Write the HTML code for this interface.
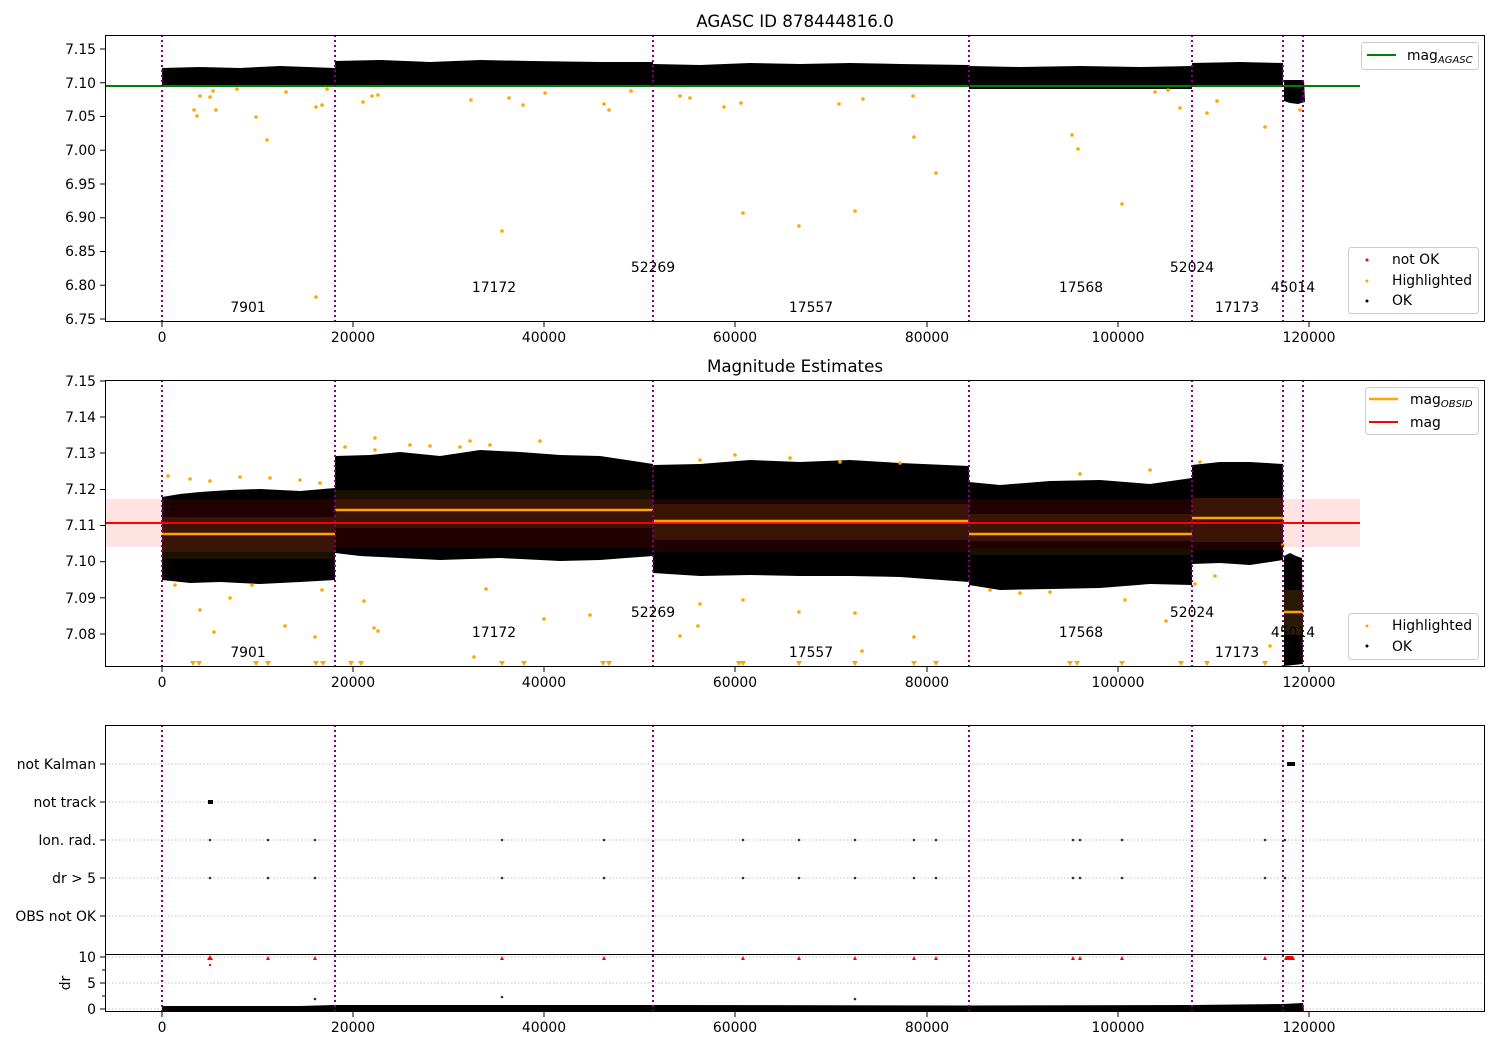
<!DOCTYPE html>
<html><head><meta charset="utf-8"><style>
html,body{margin:0;padding:0;background:#fff;}
svg{display:block;font-family:"DejaVu Sans","Liberation Sans",sans-serif;}
</style></head><body>
<svg width="1500" height="1050" viewBox="0 0 1500 1050" xmlns="http://www.w3.org/2000/svg">
<rect width="1500" height="1050" fill="#fff"/>
<text x="795" y="27" font-size="16.7" text-anchor="middle">AGASC ID 878444816.0</text>

<!-- ===== PLOT 1 ===== -->
<g>
<g fill="#000">
<path d="M162,68 L200,67 240,68 280,66 335,68 L335,87 L162,87Z"/>
<path d="M335,61 L380,60 430,62 480,60 530,61 600,62 653,62 L653,86 L335,86Z"/>
<path d="M653,64 L700,65 750,63 800,64 850,63 900,64 969,65 L969,87 L653,87Z"/>
<path d="M969,66 L1020,67 1080,66 1140,67 1192,66 L1192,89 L969,89Z"/>
<path d="M1192,63 L1240,62 1283,63 L1283,85 L1192,85Z"/>
<path d="M1284,80 L1304,80 L1305,102 1298,104 1290,103 1284,101Z"/>
</g>
<line x1="105" y1="86" x2="1360" y2="86" stroke="#008000" stroke-width="2"/>
<g fill="#ffa500">
<circle cx="194" cy="110" r="1.8"/><circle cx="197" cy="116" r="1.8"/><circle cx="200" cy="96" r="1.8"/><circle cx="210" cy="97" r="1.8"/><circle cx="213" cy="91" r="1.8"/><circle cx="256" cy="117" r="1.8"/><circle cx="267" cy="140" r="1.8"/><circle cx="216" cy="110" r="1.8"/><circle cx="237" cy="89" r="1.8"/><circle cx="286" cy="92" r="1.8"/><circle cx="316" cy="107" r="1.8"/><circle cx="322" cy="105" r="1.8"/><circle cx="327" cy="89" r="1.8"/>
<circle cx="316" cy="297" r="1.8"/><circle cx="363" cy="102" r="1.8"/><circle cx="378" cy="95" r="1.8"/><circle cx="372" cy="96" r="1.8"/><circle cx="471" cy="100" r="1.8"/><circle cx="509" cy="98" r="1.8"/><circle cx="523" cy="105" r="1.8"/><circle cx="545" cy="93" r="1.8"/><circle cx="502" cy="231" r="1.8"/><circle cx="604" cy="104" r="1.8"/><circle cx="609" cy="110" r="1.8"/><circle cx="631" cy="91" r="1.8"/>
<circle cx="680" cy="96" r="1.8"/><circle cx="690" cy="98" r="1.8"/><circle cx="724" cy="107" r="1.8"/><circle cx="741" cy="103" r="1.8"/><circle cx="743" cy="213" r="1.8"/><circle cx="799" cy="226" r="1.8"/><circle cx="839" cy="104" r="1.8"/><circle cx="855" cy="211" r="1.8"/><circle cx="863" cy="99" r="1.8"/><circle cx="914" cy="137" r="1.8"/><circle cx="936" cy="173" r="1.8"/><circle cx="913" cy="96" r="1.8"/>
<circle cx="1072" cy="135" r="1.8"/><circle cx="1078" cy="149" r="1.8"/><circle cx="1122" cy="204" r="1.8"/><circle cx="1155" cy="92" r="1.8"/><circle cx="1168" cy="90" r="1.8"/><circle cx="1180" cy="108" r="1.8"/><circle cx="1207" cy="113" r="1.8"/><circle cx="1217" cy="101" r="1.8"/><circle cx="1265" cy="127" r="1.8"/><circle cx="1300" cy="110" r="1.8"/>
</g>
<g stroke="#800080" stroke-width="2" stroke-dasharray="2,3">
<line x1="162" y1="35" x2="162" y2="321"/><line x1="335" y1="35" x2="335" y2="321"/><line x1="653" y1="35" x2="653" y2="321"/><line x1="969" y1="35" x2="969" y2="321"/><line x1="1192" y1="35" x2="1192" y2="321"/><line x1="1283" y1="35" x2="1283" y2="321"/><line x1="1303" y1="35" x2="1303" y2="321"/>
</g>
<g font-size="13.9" text-anchor="middle">
<text x="248" y="312">7901</text><text x="494" y="292">17172</text><text x="653" y="272">52269</text><text x="811" y="312">17557</text><text x="1081" y="292">17568</text><text x="1192" y="272">52024</text><text x="1237" y="312">17173</text><text x="1293" y="292">45014</text>
</g>
<rect x="105.5" y="35.5" width="1379" height="286" fill="none" stroke="#000" stroke-width="1"/>
<g stroke="#000"><line x1="100" y1="49" x2="105" y2="49"/><line x1="100" y1="82.75" x2="105" y2="82.75"/><line x1="100" y1="116.5" x2="105" y2="116.5"/><line x1="100" y1="150.25" x2="105" y2="150.25"/><line x1="100" y1="184" x2="105" y2="184"/><line x1="100" y1="217.75" x2="105" y2="217.75"/><line x1="100" y1="251.5" x2="105" y2="251.5"/><line x1="100" y1="285.25" x2="105" y2="285.25"/><line x1="100" y1="319" x2="105" y2="319"/></g>
<g font-size="13.9" text-anchor="end">
<text x="96" y="54">7.15</text><text x="96" y="88">7.10</text><text x="96" y="121">7.05</text><text x="96" y="155">7.00</text><text x="96" y="189">6.95</text><text x="96" y="222">6.90</text><text x="96" y="256">6.85</text><text x="96" y="290">6.80</text><text x="96" y="324">6.75</text>
</g>
<g stroke="#000"><line x1="162" y1="322" x2="162" y2="327"/><line x1="353" y1="322" x2="353" y2="327"/><line x1="544" y1="322" x2="544" y2="327"/><line x1="735" y1="322" x2="735" y2="327"/><line x1="927" y1="322" x2="927" y2="327"/><line x1="1118" y1="322" x2="1118" y2="327"/><line x1="1309" y1="322" x2="1309" y2="327"/></g>
<g font-size="13.9" text-anchor="middle">
<text x="162" y="342">0</text><text x="353" y="342">20000</text><text x="544" y="342">40000</text><text x="735" y="342">60000</text><text x="927" y="342">80000</text><text x="1118" y="342">100000</text><text x="1309" y="342">120000</text>
</g>
<rect x="1361.5" y="42.5" width="117" height="27" rx="3" fill="#fff" fill-opacity="0.8" stroke="#ccc"/>
<line x1="1367" y1="55" x2="1396" y2="55" stroke="#008000" stroke-width="2"/>
<text x="1407" y="60" font-size="13.9">mag<tspan font-size="10" font-style="italic" dy="3">AGASC</tspan></text>
<rect x="1348.5" y="247.5" width="130" height="66" rx="3" fill="#fff" fill-opacity="0.8" stroke="#ccc"/>
<circle cx="1367" cy="260" r="1.5" fill="#f00"/><text x="1392" y="264" font-size="13.9">not OK</text>
<circle cx="1367" cy="281" r="1.5" fill="#ffa500"/><text x="1392" y="285" font-size="13.9">Highlighted</text>
<circle cx="1367" cy="301" r="1.5" fill="#000"/><text x="1392" y="305" font-size="13.9">OK</text>
</g>

<!-- ===== PLOT 2 ===== -->
<g>
<text x="795" y="372" font-size="16.7" text-anchor="middle">Magnitude Estimates</text>
<rect x="105" y="499" width="1255" height="48" fill="#ffcccc" fill-opacity="0.55"/>
<g fill="#000">
<path d="M162,497 L180,494 200,492 230,490 260,489 300,491 335,488 L335,580 L300,582 260,584 220,582 190,583 162,580Z"/>
<path d="M335,456 L370,455 400,452 440,456 480,450 520,452 560,455 600,456 653,464 L653,556 L600,560 560,561 500,558 440,560 400,558 360,556 335,553Z"/>
<path d="M653,465 L700,464 750,460 800,462 850,460 900,463 969,466 L969,582 L900,577 850,576 800,576 750,575 700,576 653,573Z"/>
<path d="M969,482 L1000,485 1050,481 1100,480 1150,484 1192,478 L1192,585 L1150,584 1100,588 1050,589 1000,590 969,585Z"/>
<path d="M1192,465 L1220,462 1250,462 1283,464 L1283,560 L1250,565 1220,563 1192,564Z"/>
<path d="M1284,556 L1290,553 1296,556 1302,558 L1303,664 L1284,666Z"/>
</g>
<rect x="162" y="499" width="173" height="53" fill="#200000"/>
<rect x="162" y="517" width="173" height="35" fill="#3a1505"/>
<rect x="162" y="552" width="173" height="7" fill="#1a1000"/>
<rect x="335" y="490" width="318" height="10" fill="#1a1000"/>
<rect x="335" y="499" width="318" height="48" fill="#3a1505"/>
<rect x="335" y="528" width="318" height="20" fill="#200000"/>
<rect x="653" y="499" width="316" height="53" fill="#200000"/>
<rect x="653" y="504" width="316" height="36" fill="#3a1505"/>
<rect x="969" y="499" width="223" height="53" fill="#200000"/>
<rect x="969" y="514" width="223" height="27" fill="#3a1505"/>
<rect x="969" y="548" width="223" height="7" fill="#1a1000"/>
<rect x="1192" y="498" width="91" height="44" fill="#3a1505"/>
<rect x="1192" y="542" width="91" height="8" fill="#200000"/>
<rect x="1284" y="590" width="19" height="45" fill="#2a1a05"/>
<line x1="105" y1="523" x2="1360" y2="523" stroke="#f00" stroke-width="2"/>
<g stroke="#ffa500" stroke-width="2.5">
<line x1="162" y1="534" x2="335" y2="534"/><line x1="335" y1="510" x2="653" y2="510"/><line x1="653" y1="521" x2="969" y2="521"/><line x1="969" y1="534" x2="1192" y2="534"/><line x1="1192" y1="518" x2="1283" y2="518"/><line x1="1284" y1="612" x2="1303" y2="612"/>
</g>
<g fill="#ffa500">
<circle cx="168" cy="476" r="1.8"/><circle cx="190" cy="479" r="1.8"/><circle cx="210" cy="481" r="1.8"/><circle cx="240" cy="477" r="1.8"/><circle cx="270" cy="478" r="1.8"/><circle cx="300" cy="480" r="1.8"/><circle cx="320" cy="483" r="1.8"/><circle cx="175" cy="585" r="1.8"/><circle cx="200" cy="610" r="1.8"/><circle cx="214" cy="632" r="1.8"/><circle cx="230" cy="598" r="1.8"/><circle cx="252" cy="585" r="1.8"/><circle cx="285" cy="626" r="1.8"/><circle cx="315" cy="637" r="1.8"/><circle cx="322" cy="590" r="1.8"/>
<circle cx="345" cy="447" r="1.8"/><circle cx="375" cy="438" r="1.8"/><circle cx="410" cy="445" r="1.8"/><circle cx="375" cy="450" r="1.8"/><circle cx="430" cy="446" r="1.8"/><circle cx="460" cy="447" r="1.8"/><circle cx="470" cy="441" r="1.8"/><circle cx="490" cy="445" r="1.8"/><circle cx="540" cy="441" r="1.8"/><circle cx="364" cy="601" r="1.8"/><circle cx="374" cy="628" r="1.8"/><circle cx="378" cy="631" r="1.8"/><circle cx="486" cy="589" r="1.8"/><circle cx="474" cy="657" r="1.8"/><circle cx="544" cy="619" r="1.8"/><circle cx="590" cy="615" r="1.8"/>
<circle cx="700" cy="460" r="1.8"/><circle cx="735" cy="455" r="1.8"/><circle cx="790" cy="458" r="1.8"/><circle cx="840" cy="462" r="1.8"/><circle cx="900" cy="463" r="1.8"/><circle cx="700" cy="604" r="1.8"/><circle cx="698" cy="626" r="1.8"/><circle cx="743" cy="600" r="1.8"/><circle cx="799" cy="612" r="1.8"/><circle cx="855" cy="613" r="1.8"/><circle cx="862" cy="651" r="1.8"/><circle cx="914" cy="637" r="1.8"/><circle cx="680" cy="636" r="1.8"/>
<circle cx="990" cy="590" r="1.8"/><circle cx="1020" cy="593" r="1.8"/><circle cx="1050" cy="592" r="1.8"/><circle cx="1080" cy="474" r="1.8"/><circle cx="1150" cy="470" r="1.8"/><circle cx="1166" cy="621" r="1.8"/><circle cx="1125" cy="600" r="1.8"/><circle cx="1200" cy="462" r="1.8"/><circle cx="1195" cy="584" r="1.8"/><circle cx="1215" cy="576" r="1.8"/><circle cx="1270" cy="646" r="1.8"/><circle cx="1283" cy="545" r="1.8"/>
</g>
<g fill="#ffa500">
<path d="M190,661h6l-3,5z M196,661h6l-3,5z M253,661h6l-3,5z M265,661h6l-3,5z M313,661h6l-3,5z M320,661h6l-3,5z M348,661h6l-3,5z M358,661h6l-3,5z M499,661h6l-3,5z M521,661h6l-3,5z M600,661h6l-3,5z M606,661h6l-3,5z M736,661h6l-3,5z M740,661h6l-3,5z M796,661h6l-3,5z M852,661h6l-3,5z M911,661h6l-3,5z M933,661h6l-3,5z M1067,661h6l-3,5z M1074,661h6l-3,5z M1119,661h6l-3,5z M1178,661h6l-3,5z M1204,661h6l-3,5z M1262,661h6l-3,5z"/>
</g>
<g stroke="#800080" stroke-width="2" stroke-dasharray="2,3">
<line x1="162" y1="380" x2="162" y2="666"/><line x1="335" y1="380" x2="335" y2="666"/><line x1="653" y1="380" x2="653" y2="666"/><line x1="969" y1="380" x2="969" y2="666"/><line x1="1192" y1="380" x2="1192" y2="666"/><line x1="1283" y1="380" x2="1283" y2="666"/><line x1="1303" y1="380" x2="1303" y2="666"/>
</g>
<g font-size="13.9" text-anchor="middle">
<text x="248" y="657">7901</text><text x="494" y="637">17172</text><text x="653" y="617">52269</text><text x="811" y="657">17557</text><text x="1081" y="637">17568</text><text x="1192" y="617">52024</text><text x="1237" y="657">17173</text><text x="1293" y="637">45014</text>
</g>
<rect x="105.5" y="380.5" width="1379" height="286" fill="none" stroke="#000"/>
<g stroke="#000"><line x1="100" y1="381" x2="105" y2="381"/><line x1="100" y1="417" x2="105" y2="417"/><line x1="100" y1="453" x2="105" y2="453"/><line x1="100" y1="489.5" x2="105" y2="489.5"/><line x1="100" y1="525.5" x2="105" y2="525.5"/><line x1="100" y1="561.7" x2="105" y2="561.7"/><line x1="100" y1="597.8" x2="105" y2="597.8"/><line x1="100" y1="634" x2="105" y2="634"/></g>
<g font-size="13.9" text-anchor="end">
<text x="96" y="386">7.15</text><text x="96" y="422">7.14</text><text x="96" y="458">7.13</text><text x="96" y="494">7.12</text><text x="96" y="530">7.11</text><text x="96" y="566">7.10</text><text x="96" y="603">7.09</text><text x="96" y="639">7.08</text>
</g>
<g stroke="#000"><line x1="162" y1="667" x2="162" y2="672"/><line x1="353" y1="667" x2="353" y2="672"/><line x1="544" y1="667" x2="544" y2="672"/><line x1="735" y1="667" x2="735" y2="672"/><line x1="927" y1="667" x2="927" y2="672"/><line x1="1118" y1="667" x2="1118" y2="672"/><line x1="1309" y1="667" x2="1309" y2="672"/></g>
<g font-size="13.9" text-anchor="middle">
<text x="162" y="687">0</text><text x="353" y="687">20000</text><text x="544" y="687">40000</text><text x="735" y="687">60000</text><text x="927" y="687">80000</text><text x="1118" y="687">100000</text><text x="1309" y="687">120000</text>
</g>
<rect x="1365.5" y="387.5" width="113" height="47" rx="3" fill="#fff" fill-opacity="0.8" stroke="#ccc"/>
<line x1="1369" y1="399" x2="1398" y2="399" stroke="#ffa500" stroke-width="2.5"/>
<text x="1410" y="404" font-size="13.9">mag<tspan font-size="10" font-style="italic" dy="3">OBSID</tspan></text>
<line x1="1369" y1="422" x2="1398" y2="422" stroke="#f00" stroke-width="2"/>
<text x="1410" y="427" font-size="13.9">mag</text>
<rect x="1348.5" y="613.5" width="130" height="46" rx="3" fill="#fff" fill-opacity="0.8" stroke="#ccc"/>
<circle cx="1367" cy="626" r="1.5" fill="#ffa500"/><text x="1392" y="630" font-size="13.9">Highlighted</text>
<circle cx="1367" cy="646" r="1.5" fill="#000"/><text x="1392" y="651" font-size="13.9">OK</text>
</g>

<!-- ===== PLOT 3 ===== -->
<g>
<g stroke="#b0b0b0" stroke-width="0.8" stroke-dasharray="1.5,2">
<line x1="105" y1="764" x2="1485" y2="764"/><line x1="105" y1="802" x2="1485" y2="802"/><line x1="105" y1="840" x2="1485" y2="840"/><line x1="105" y1="878" x2="1485" y2="878"/><line x1="105" y1="916" x2="1485" y2="916"/><line x1="105" y1="957" x2="1485" y2="957"/><line x1="105" y1="983" x2="1485" y2="983"/><line x1="105" y1="1009" x2="1485" y2="1009"/>
</g>
<line x1="105" y1="954.5" x2="1485" y2="954.5" stroke="#000"/>
<g fill="#333">
<circle cx="210" cy="840" r="1.3"/><circle cx="268" cy="840" r="1.3"/><circle cx="315" cy="840" r="1.3"/><circle cx="502" cy="840" r="1.3"/><circle cx="604" cy="840" r="1.3"/><circle cx="743" cy="840" r="1.3"/><circle cx="799" cy="840" r="1.3"/><circle cx="855" cy="840" r="1.3"/><circle cx="914" cy="840" r="1.3"/><circle cx="936" cy="840" r="1.3"/><circle cx="1073" cy="840" r="1.3"/><circle cx="1080" cy="840" r="1.3"/><circle cx="1122" cy="840" r="1.3"/><circle cx="1265" cy="840" r="1.3"/><circle cx="1285" cy="840" r="1.3"/>
<circle cx="210" cy="878" r="1.3"/><circle cx="268" cy="878" r="1.3"/><circle cx="315" cy="878" r="1.3"/><circle cx="502" cy="878" r="1.3"/><circle cx="604" cy="878" r="1.3"/><circle cx="743" cy="878" r="1.3"/><circle cx="799" cy="878" r="1.3"/><circle cx="855" cy="878" r="1.3"/><circle cx="914" cy="878" r="1.3"/><circle cx="936" cy="878" r="1.3"/><circle cx="1073" cy="878" r="1.3"/><circle cx="1080" cy="878" r="1.3"/><circle cx="1122" cy="878" r="1.3"/><circle cx="1265" cy="878" r="1.3"/><circle cx="1285" cy="878" r="1.3"/>
<circle cx="315" cy="999" r="1.3"/><circle cx="502" cy="997" r="1.3"/><circle cx="855" cy="999" r="1.3"/>
</g>
<rect x="208" y="800" width="5" height="4" fill="#000"/>
<rect x="1287" y="762" width="8" height="4" fill="#000"/>
<g fill="#f00">
<path d="M207,960 l3,-5 l3,5z M268,960 m-2,0 l2,-4 l2,4z M315,960 m-2,0 l2,-4 l2,4z M502,960 m-2,0 l2,-4 l2,4z M604,960 m-2,0 l2,-4 l2,4z M743,960 m-2,0 l2,-4 l2,4z M799,960 m-2,0 l2,-4 l2,4z M855,960 m-2,0 l2,-4 l2,4z M914,960 m-2,0 l2,-4 l2,4z M936,960 m-2,0 l2,-4 l2,4z M1073,960 m-2,0 l2,-4 l2,4z M1080,960 m-2,0 l2,-4 l2,4z M1122,960 m-2,0 l2,-4 l2,4z M1265,960 m-2,0 l2,-4 l2,4z M1284,960 l2,-4 l7,0 l2,4z"/>
<circle cx="210" cy="965" r="1.2"/>
</g>
<path d="M162,1006 L300,1006 335,1005 653,1005 969,1005.5 1192,1005 1283,1004 1303,1003 L1304,1011 L162,1011Z" fill="#000"/>
<g stroke="#800080" stroke-width="2" stroke-dasharray="2,3">
<line x1="162" y1="725" x2="162" y2="1011"/><line x1="335" y1="725" x2="335" y2="1011"/><line x1="653" y1="725" x2="653" y2="1011"/><line x1="969" y1="725" x2="969" y2="1011"/><line x1="1192" y1="725" x2="1192" y2="1011"/><line x1="1283" y1="725" x2="1283" y2="1011"/><line x1="1303" y1="725" x2="1303" y2="1011"/>
</g>
<rect x="105.5" y="725.5" width="1379" height="286" fill="none" stroke="#000"/>
<g stroke="#000"><line x1="100" y1="764" x2="105" y2="764"/><line x1="100" y1="802" x2="105" y2="802"/><line x1="100" y1="840" x2="105" y2="840"/><line x1="100" y1="878" x2="105" y2="878"/><line x1="100" y1="916" x2="105" y2="916"/><line x1="100" y1="957" x2="105" y2="957"/><line x1="100" y1="983" x2="105" y2="983"/><line x1="100" y1="1009" x2="105" y2="1009"/><line x1="102" y1="970" x2="105" y2="970"/><line x1="102" y1="996" x2="105" y2="996"/></g>
<g font-size="13.9" text-anchor="end">
<text x="96" y="769">not Kalman</text><text x="96" y="807">not track</text><text x="96" y="845">Ion. rad.</text><text x="96" y="883">dr &gt; 5</text><text x="96" y="921">OBS not OK</text><text x="96" y="962">10</text><text x="96" y="988">5</text><text x="96" y="1014">0</text>
</g>
<text transform="translate(70,983) rotate(-90)" font-size="13.9" text-anchor="middle">dr</text>
<g stroke="#000"><line x1="162" y1="1012" x2="162" y2="1017"/><line x1="353" y1="1012" x2="353" y2="1017"/><line x1="544" y1="1012" x2="544" y2="1017"/><line x1="735" y1="1012" x2="735" y2="1017"/><line x1="927" y1="1012" x2="927" y2="1017"/><line x1="1118" y1="1012" x2="1118" y2="1017"/><line x1="1309" y1="1012" x2="1309" y2="1017"/></g>
<g font-size="13.9" text-anchor="middle">
<text x="162" y="1032">0</text><text x="353" y="1032">20000</text><text x="544" y="1032">40000</text><text x="735" y="1032">60000</text><text x="927" y="1032">80000</text><text x="1118" y="1032">100000</text><text x="1309" y="1032">120000</text>
</g>
</g>
</svg>
</body></html>
